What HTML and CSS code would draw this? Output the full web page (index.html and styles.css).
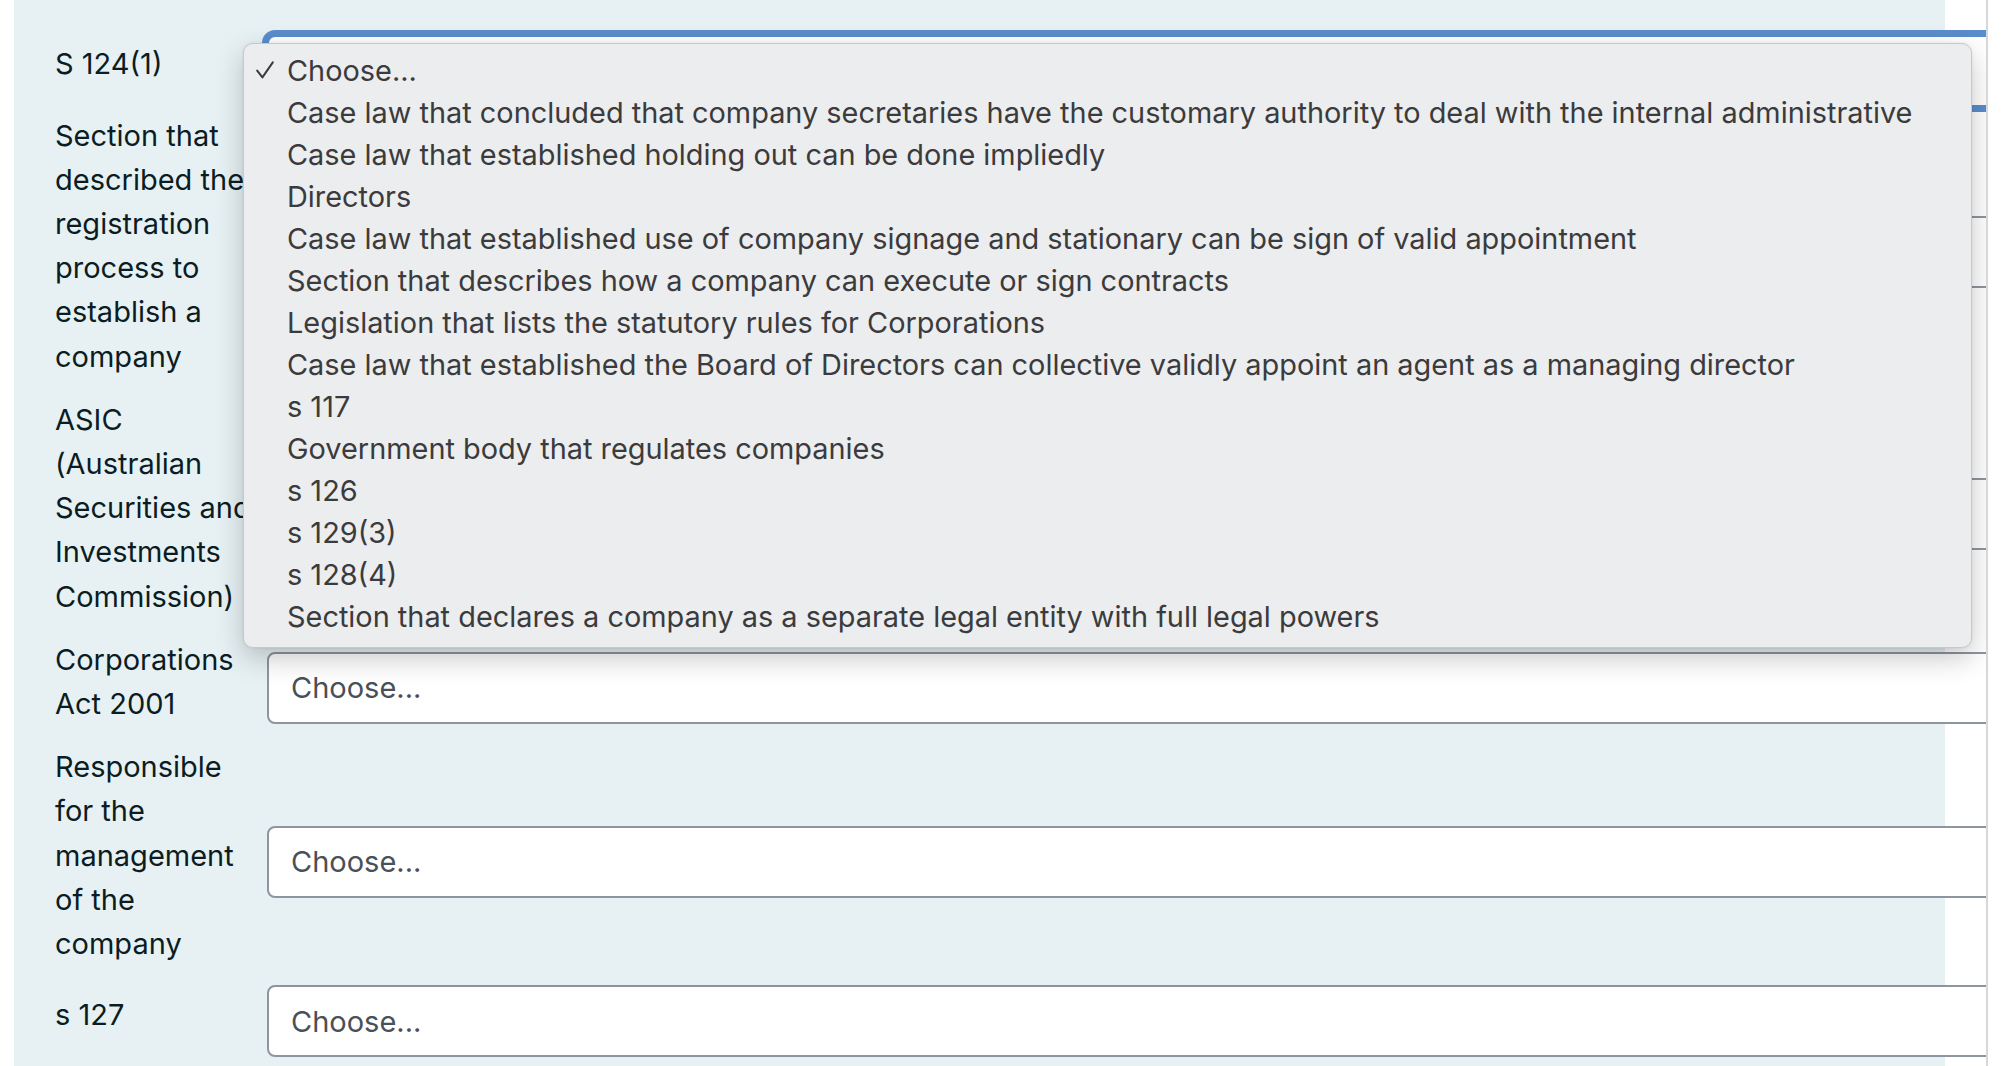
FILE: index.html
```html
<!DOCTYPE html>
<html lang="en">
<head>
<meta charset="utf-8">
<title>Matching question</title>
<link rel="stylesheet" href="styles.css">
</head>
<body>
<div class="page">
  <div class="viewport">
    <div class="formulation">
      <div class="row">
        <div class="text">S 124(1)</div>
        <div class="control"><div class="select focus">Choose...</div></div>
      </div>
      <div class="row">
        <div class="text">Section that described the registration process to establish a company</div>
        <div class="control"><div class="select">Choose...</div></div>
      </div>
      <div class="row">
        <div class="text">ASIC (Australian Securities and Investments Commission)</div>
        <div class="control"><div class="select">Choose...</div></div>
      </div>
      <div class="row">
        <div class="text">Corporations Act 2001</div>
        <div class="control"><div class="select">Choose...</div></div>
      </div>
      <div class="row">
        <div class="text">Responsible for the management of the company</div>
        <div class="control"><div class="select">Choose...</div></div>
      </div>
      <div class="row">
        <div class="text">s 127</div>
        <div class="control"><div class="select">Choose...</div></div>
      </div>
    </div>

    <div class="popup">
      <div class="opt"><span class="check"><svg viewBox="0 0 18 18" width="18" height="18"><polyline points="1.2,9.6 6.4,16.4 16.8,1.4" fill="none" stroke="#3b3b3d" stroke-width="2" stroke-linecap="round" stroke-linejoin="round"/></svg></span>Choose...</div>
      <div class="opt"><span class="check"></span>Case law that concluded that company secretaries have the customary authority to deal with the internal administrative</div>
      <div class="opt"><span class="check"></span>Case law that established holding out can be done impliedly</div>
      <div class="opt"><span class="check"></span>Directors</div>
      <div class="opt"><span class="check"></span>Case law that established use of company signage and stationary can be sign of valid appointment</div>
      <div class="opt"><span class="check"></span>Section that describes how a company can execute or sign contracts</div>
      <div class="opt"><span class="check"></span>Legislation that lists the statutory rules for Corporations</div>
      <div class="opt"><span class="check"></span>Case law that established the Board of Directors can collective validly appoint an agent as a managing director</div>
      <div class="opt"><span class="check"></span>s 117</div>
      <div class="opt"><span class="check"></span>Government body that regulates companies</div>
      <div class="opt"><span class="check"></span>s 126</div>
      <div class="opt"><span class="check"></span>s 129(3)</div>
      <div class="opt"><span class="check"></span>s 128(4)</div>
      <div class="opt"><span class="check"></span>Section that declares a company as a separate legal entity with full legal powers</div>
    </div>
  </div>
</div>
</body>
</html>
```

FILE: styles.css
```css
* { box-sizing: border-box; }
html, body { margin: 0; padding: 0; }
body {
  background: #ffffff;
  font-family: Inter, "Noto Sans", sans-serif;
  overflow: hidden;
}
.page {
  display: flex;
  height: 1066px;
}
.viewport {
  position: relative;
  width: 1988px;
  height: 1066px;
  overflow: hidden;
  padding-left: 14px;
  border-right: 2px solid #d6d7d8;
}
.formulation {
  width: 1931px;
  height: 100%;
  background: #e7f1f4;
  color: #0b1d22;
  padding: 31px 0 0 41px;
}
.row {
  display: grid;
  grid-template-columns: 201px 1780px;
  column-gap: 11px;
  align-items: center;
  padding: 3.5px 0;
}
.text {
  font-size: 29px;
  line-height: 44.2px;
  padding-bottom: 12px;
}
.select {
  height: 72px;
  border: 2px solid #8f959e;
  border-radius: 8px;
  background: #ffffff;
  color: #495057;
  font-size: 29px;
  display: flex;
  align-items: center;
  padding-left: 22px;
}
.select.focus {
  border-color: #5a8dcc;
  box-shadow: 0 0 0 5px #5a8dcc;
}
.popup {
  position: absolute;
  left: 243px;
  top: 43px;
  width: 1729px;
  height: 605px;
  padding: 5px 0 12px;
  background: #ecedee;
  border: 1px solid #c9c9cb;
  border-radius: 10px;
  box-shadow: 0 10px 28px rgba(0, 0, 0, 0.22), 0 0 3px rgba(0, 0, 0, 0.08);
}
.opt {
  display: flex;
  align-items: center;
  height: 42px;
  font-size: 28.9px;
  color: #3b3b3d;
  white-space: nowrap;
}
.check {
  flex: none;
  width: 43px;
  display: flex;
  align-items: center;
  padding-left: 12px;
}
.check svg { display: block; }
```
